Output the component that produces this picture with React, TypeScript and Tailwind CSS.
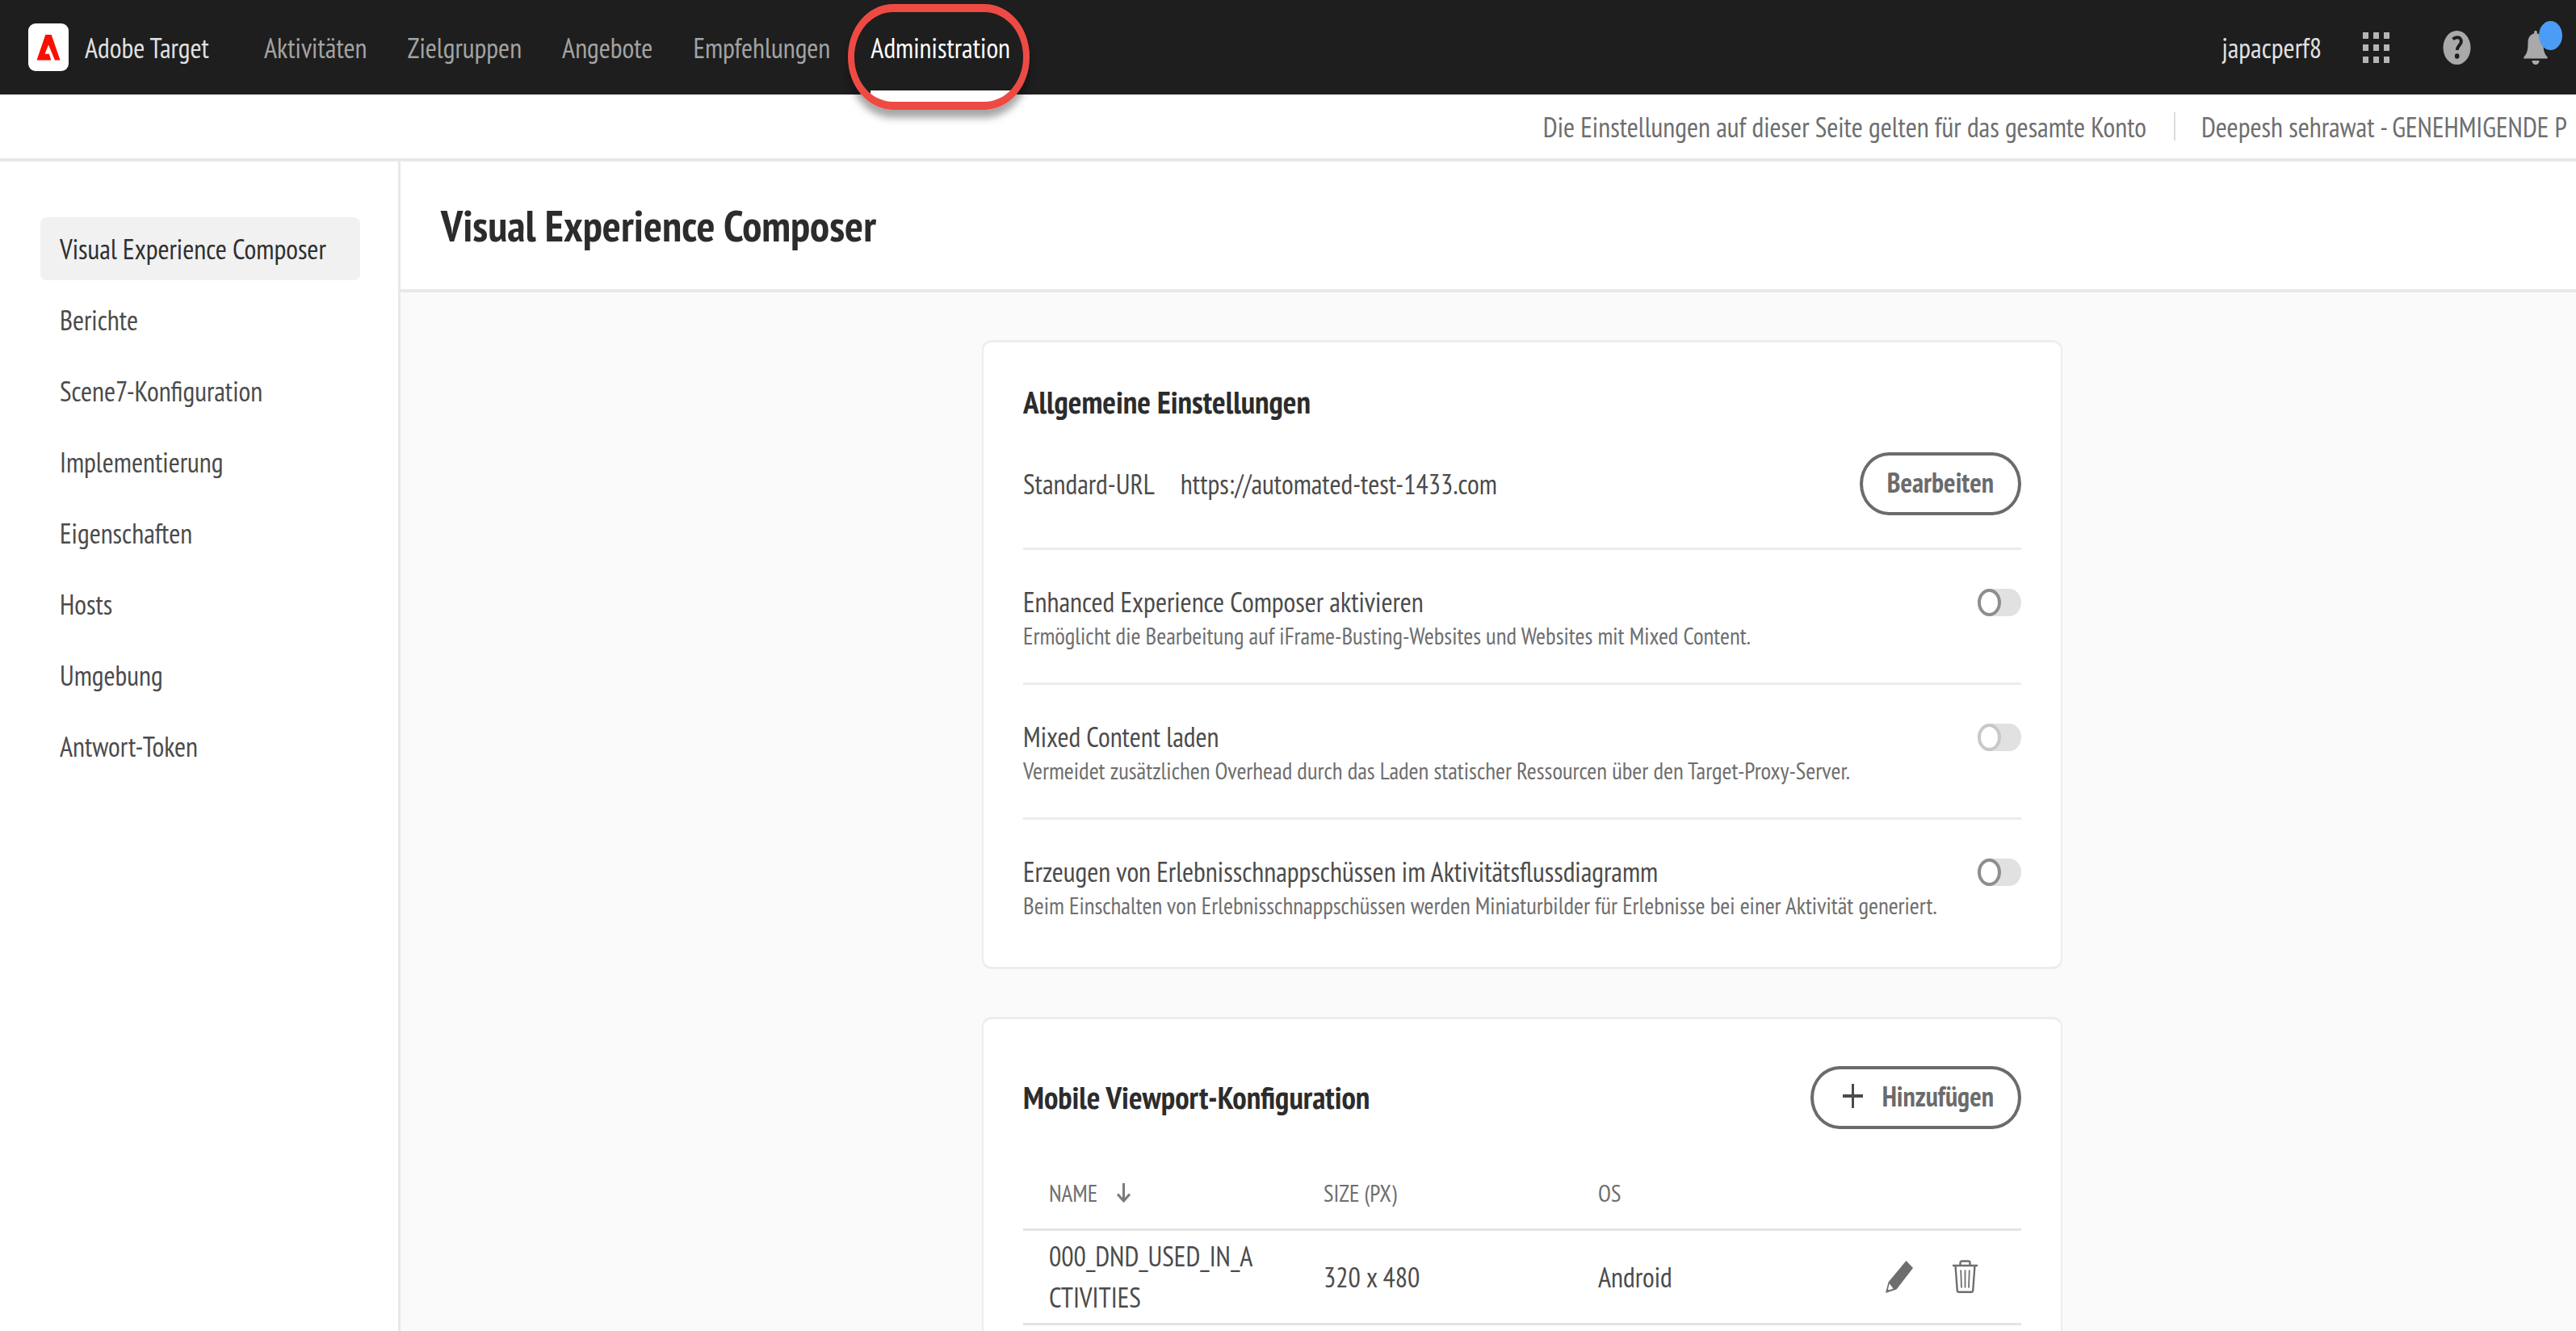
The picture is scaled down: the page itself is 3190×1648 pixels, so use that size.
import React, { useState } from 'react';

const NAV = ['Aktivitäten', 'Zielgruppen', 'Angebote', 'Empfehlungen'];

const SIDE_LINKS = [
  'Visual Experience Composer',
  'Berichte',
  'Scene7-Konfiguration',
  'Implementierung',
  'Eigenschaften',
  'Hosts',
  'Umgebung',
  'Antwort-Token',
];

const SETTINGS = [
  {
    id: 'eec',
    title: 'Enhanced Experience Composer aktivieren',
    text: 'Ermöglicht die Bearbeitung auf iFrame-Busting-Websites und Websites mit Mixed Content.',
    disabled: false,
  },
  {
    id: 'mixed',
    title: 'Mixed Content laden',
    text: 'Vermeidet zusätzlichen Overhead durch das Laden statischer Ressourcen über den Target-Proxy-Server.',
    disabled: true,
  },
  {
    id: 'snapshots',
    title: 'Erzeugen von Erlebnisschnappschüssen im Aktivitätsflussdiagramm',
    text: 'Beim Einschalten von Erlebnisschnappschüssen werden Miniaturbilder für Erlebnisse bei einer Aktivität generiert.',
    disabled: false,
  },
];

function AdobeLogo() {
  return (
    <span className="flex h-[59px] w-[50px] items-center justify-center rounded-[9px] bg-white">
      <svg className="h-8 w-[30px]" viewBox="0 0 30 32" fill="#fa0f00" aria-hidden="true">
        <path d="M11.300 0h7.400L29.500 31.500h-6.500L15 12.500 10.500 23.800h5.300l2.500 7.700H0.500Z" />
      </svg>
    </span>
  );
}

function AppsIcon() {
  const cells = [0, 1, 2];
  return (
    <svg className="h-[38px] w-[33px]" viewBox="0 0 33 38" fill="#b5b5b5" aria-hidden="true">
      {cells.map((r) => cells.map((c) => <rect key={`${r}${c}`} x={c * 13} y={r * 15} width="7" height="8" />))}
    </svg>
  );
}

function HelpIcon() {
  return (
    <svg className="h-[42px] w-[35px]" viewBox="0 0 35 42" aria-hidden="true">
      <ellipse cx="17.500" cy="21" rx="17" ry="21" fill="#a9a9a9" />
      <path d="M12.500 10.500c2-1.700 3.500-2.200 5.500-2.200 3.200 0 4.800 2.400 4.800 5.200 0 4.500-5 5-5 10.500" fill="none" stroke="#1e1e1e" strokeWidth="4" />
      <ellipse cx="17.700" cy="31.500" rx="2.800" ry="3.300" fill="#1e1e1e" />
    </svg>
  );
}

function BellIcon() {
  return (
    <svg className="h-[42px] w-[30px]" viewBox="0 0 30 42" fill="#a9a9a9" aria-hidden="true">
      <path d="M13.200 3.500V1.500C13.200.5 14 0 15 0s1.800.5 1.800 1.500v2C22 4.500 24.500 9 24.500 15c0 10 1.500 13.500 5 17.500.8 1 .3 2-.7 2H1.200c-1 0-1.500-1-.7-2 3.500-4 5-7.500 5-17.500 0-6 2.500-10.500 7.700-11.500Z" />
      <path d="M10.500 37h9c0 3-2 5-4.500 5s-4.500-2-4.500-5Z" />
    </svg>
  );
}

function SortArrow() {
  return (
    <svg className="h-6 w-[17px]" viewBox="0 0 17 24" fill="none" stroke="#7b7b7b" strokeWidth="3" aria-hidden="true">
      <path d="M8.500 0v22M1 13.500l7.500 8.500 7.500-8.500" />
    </svg>
  );
}

function PencilIcon() {
  return (
    <svg className="h-10 w-[34px]" viewBox="0 0 34 40" aria-hidden="true">
      <path d="M25.500 0 34 9 13.500 35.500 0 40 3.500 26.500Z" fill="#6e6e6e" />
      <path d="M4.800 28.200 9.500 34.500 4.200 36.500 3 35.200Z" fill="#fff" />
    </svg>
  );
}

function TrashIcon() {
  return (
    <svg className="h-[41px] w-[31px]" viewBox="0 0 31 41" fill="none" stroke="#6e6e6e" strokeWidth="2.400" aria-hidden="true">
      <path d="M0 7h31M9.500 7V3.500a2 2 0 0 1 2-2h8a2 2 0 0 1 2 2V7M3.500 7l2.300 31a2 2 0 0 0 2 1.800h15.400a2 2 0 0 0 2-1.800L27.500 7" />
      <path d="M10.200 12.500l.8 22M15.500 12.500v22M20.800 12.500l-.8 22" strokeWidth="1.800" />
    </svg>
  );
}

function Header() {
  return (
    <header className="relative z-10 flex h-[117px] shrink-0 items-center bg-[#1e1e1e] pl-[35px]">
      <a href="#home" className="flex items-center gap-5 text-[#e1e1e1]">
        <AdobeLogo />
        <span>Adobe Target</span>
      </a>
      <nav className="ml-[68px] flex h-full items-center gap-[50px] text-[#a3a3a3]">
        {NAV.map((n) => (
          <a key={n} href="#nav">
            {n}
          </a>
        ))}
        <a href="#administration" aria-current="page" className="relative flex h-full items-center text-white">
          Administration
          <span className="absolute inset-x-0 bottom-0 h-[5px] bg-white" />
          <span className="pointer-events-none absolute -right-6 -left-7 top-[5px] h-[131px] rounded-[56px/65px] border-x-8 border-y-[10px] border-[#ee4a44] shadow-[0_10px_10px_rgba(0,0,0,0.35)]" />
        </a>
      </nav>
      <div className="ml-auto flex items-center pr-[35px]">
        <span className="mr-[51px] text-[#e1e1e1]">japacperf8</span>
        <button type="button" aria-label="Apps" className="mr-[66px]">
          <AppsIcon />
        </button>
        <button type="button" aria-label="Hilfe" className="mr-[65px]">
          <HelpIcon />
        </button>
        <button type="button" aria-label="Benachrichtigungen" className="relative">
          <BellIcon />
          <span className="absolute -top-3 -right-[18px] h-9 w-[29px] rounded-[50%] bg-[#4b9cf5]" />
        </button>
      </div>
    </header>
  );
}

function Switch({ id, disabled }: { id: string; disabled: boolean }) {
  const [on, setOn] = useState(false);
  return (
    <input
      id={id}
      type="checkbox"
      role="switch"
      checked={on}
      disabled={disabled}
      onChange={() => setOn(!on)}
      className="mt-12 flex h-[34px] w-[54px] shrink-0 appearance-none rounded-[15px/17px] bg-[#e1e1e1] before:h-full before:w-[29px] before:rounded-[50%] before:border-4 before:border-[#8e8e8e] before:bg-white checked:justify-end disabled:before:border-[#c8c8c8]"
    />
  );
}

const card = 'rounded-xl border-2 border-t-[3px] border-b-[3px] border-[#ededed] bg-white px-[49px]';
const pill = 'flex h-[78px] items-center rounded-[36px/39px] border-4 border-[#6b6b6b] bg-white pb-1 font-bold text-[#6b6b6b]';

export default function App() {
  return (
    <div className="flex h-screen flex-col overflow-hidden bg-white font-['PT_Sans_Narrow','Fira_Sans_Condensed','Open_Sans_Condensed','Noto_Sans',sans-serif] text-[34px] leading-[44px] text-[#4b4b4b]">
      <Header />
      <div className="flex h-[83px] shrink-0 items-center justify-end border-b-4 border-[#e8e8e8] text-[#6e6e6e]">
        <span>Die Einstellungen auf dieser Seite gelten für das gesamte Konto</span>
        <span className="mr-8 ml-[34px] h-[35px] w-[2px] bg-[#dcdcdc]" />
        <span className="w-[464px] overflow-hidden whitespace-nowrap">Deepesh sehrawat - GENEHMIGENDE P</span>
      </div>
      <div className="flex min-h-0 flex-1">
        <nav className="flex w-[496px] shrink-0 flex-col gap-[10px] border-r-[3px] border-[#e8e8e8] pt-[69px] pr-[47px] pl-[50px]">
          {SIDE_LINKS.map((label, i) => (
            <a
              key={label}
              href="#section"
              aria-current={i === 0 ? 'page' : undefined}
              className="flex h-[78px] items-center rounded-lg px-6 aria-[current=page]:bg-[#f1f1f1] aria-[current=page]:text-[#2f2f2f]"
            >
              {label}
            </a>
          ))}
        </nav>
        <main className="flex min-w-0 flex-1 flex-col bg-[#fafafa]">
          <div className="flex h-[162px] shrink-0 items-center border-b-4 border-[#e8e8e8] bg-white pl-[50px]">
            <h1 className="text-[54px] leading-[64px] font-bold text-[#2c2c2c]">Visual Experience Composer</h1>
          </div>
          <div className="flex min-h-0 flex-1 justify-center pt-[59px] pl-[84px]">
            <div className="flex w-full max-w-[1338px] flex-col gap-[59px]">
              <section className={`${card} shrink-0 pt-[47px] pb-[18px]`}>
                <h2 className="text-[39px] leading-[54px] font-bold text-[#2c2c2c]">Allgemeine Einstellungen</h2>
                <div className="mt-[35px] flex h-[121px] items-start border-b-[3px] border-[#ececec]">
                  <span className="mt-[17px]">Standard-URL</span>
                  <span className="mt-[17px] ml-8">https://automated-test-1433.com</span>
                  <button type="button" className={`${pill} ml-auto px-[30px]`}>
                    Bearbeiten
                  </button>
                </div>
                {SETTINGS.map((s) => (
                  <div
                    key={s.id}
                    className="flex items-start justify-between border-b-[3px] border-[#ececec] pb-[38px] last:border-b-0"
                  >
                    <div className="pt-[42px]">
                      <label htmlFor={s.id} className="block">
                        {s.title}
                      </label>
                      <p className="text-[29px] leading-[40px] text-[#6e6e6e]">{s.text}</p>
                    </div>
                    <Switch id={s.id} disabled={s.disabled} />
                  </div>
                ))}
              </section>
              <section className={`${card} shrink-0 pt-[58px] pb-24`}>
                <div className="flex items-center justify-between">
                  <h2 className="text-[39px] leading-[54px] font-bold text-[#2c2c2c]">Mobile Viewport-Konfiguration</h2>
                  <button type="button" className={`${pill} gap-6 pr-[30px] pl-9`}>
                    <svg className="h-[30px] w-[25px]" viewBox="0 0 25 30" stroke="#4b4b4b" aria-hidden="true">
                      <path d="M12.500 0v30" strokeWidth="3" />
                      <path d="M0 15h25" strokeWidth="4" />
                    </svg>
                    Hinzufügen
                  </button>
                </div>
                <table className="mt-9 w-full table-fixed border-collapse text-left">
                  <colgroup>
                    <col className="w-[340px]" />
                    <col className="w-[340px]" />
                    <col className="w-[308px]" />
                    <col />
                  </colgroup>
                  <thead>
                    <tr className="h-[88px] border-b-[3px] border-[#e4e4e4] text-[29px] text-[#6e6e6e]">
                      <th scope="col" className="pl-8 font-normal" aria-sort="ascending">
                        <button type="button" className="flex items-center gap-6">
                          NAME <SortArrow />
                        </button>
                      </th>
                      <th scope="col" className="pl-8 font-normal">SIZE (PX)</th>
                      <th scope="col" className="pl-8 font-normal">OS</th>
                      <td />
                    </tr>
                  </thead>
                  <tbody>
                    <tr className="border-b-[3px] border-[#e4e4e4]">
                      <td className="py-[6px] pr-12 pl-8 leading-[51px] break-all">000_DND_USED_IN_ACTIVITIES</td>
                      <td className="pl-8">320 x 480</td>
                      <td className="pl-8">Android</td>
                      <td>
                        <div className="flex items-center justify-end gap-[49px] pr-[54px]">
                          <button type="button" aria-label="Bearbeiten">
                            <PencilIcon />
                          </button>
                          <button type="button" aria-label="Löschen">
                            <TrashIcon />
                          </button>
                        </div>
                      </td>
                    </tr>
                  </tbody>
                </table>
              </section>
            </div>
          </div>
        </main>
      </div>
    </div>
  );
}
